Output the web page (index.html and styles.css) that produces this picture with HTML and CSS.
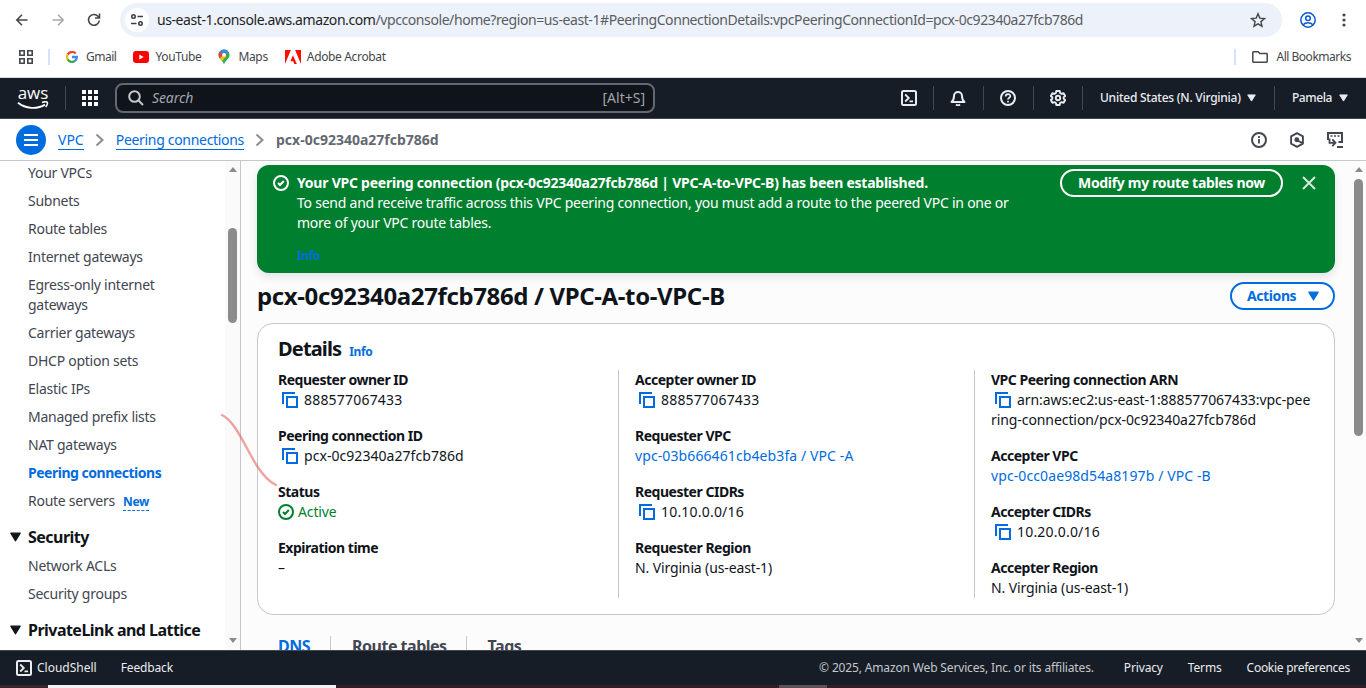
FILE: index.html
```html
<!DOCTYPE html>
<html lang="en">
<head>
<meta charset="utf-8">
<title>VPC peering connection</title>
<link rel="stylesheet" href="styles.css">
</head>
<body>
<svg class="defs" width="0" height="0">
  <symbol id="copy" viewBox="0 0 16 16"><path d="M1 12V1h12M5 5h10v10H5z" fill="none" stroke="currentColor" stroke-width="2"/></symbol>
  <symbol id="check" viewBox="0 0 16 16"><circle cx="8" cy="8" r="7" fill="none" stroke="currentColor" stroke-width="2"/><path d="M5 8l2 2 3.800-4" fill="none" stroke="currentColor" stroke-width="2"/></symbol>
  <symbol id="shell" viewBox="0 0 16 16"><rect x="1" y="1" width="14" height="14" rx="1.5" fill="none" stroke="currentColor" stroke-width="2"/><path d="M4.200 4.500L7.800 8l-3.600 3.500M8.500 11.300H12" fill="none" stroke="currentColor" stroke-width="1.800"/></symbol>
  <symbol id="down" viewBox="0 0 10 9"><path d="M.700 1h8.600L5 8z" fill="currentColor" stroke="currentColor" stroke-linejoin="round"/></symbol>
  <symbol id="chev" viewBox="0 0 10 14"><path d="M1.500 1.500L7.500 7l-6 5.500" fill="none" stroke="currentColor" stroke-width="2"/></symbol>
</svg>

<div class="toolbar">
  <svg class="ic back" viewBox="0 0 16 16"><path d="M13.500 8H3M8 2.800L2.800 8 8 13.200" fill="none" stroke="currentColor" stroke-width="1.600"/></svg>
  <svg class="ic fwd" viewBox="0 0 16 16"><path d="M2.500 8H13M8 2.800L13.200 8 8 13.200" fill="none" stroke="currentColor" stroke-width="1.600"/></svg>
  <svg class="ic reload" viewBox="0 0 16 16"><path d="M13.300 8.500A5.400 5.400 0 1 1 12 4.300L13.300 5.500M13.500 1.500V6H9" fill="none" stroke="currentColor" stroke-width="1.600"/></svg>
  <div class="omnibox">
    <span class="site"><svg width="14" height="14" viewBox="0 0 14 14" fill="none" stroke="#3c3f43" stroke-width="1.600"><circle cx="3.500" cy="3.500" r="1.700"/><path d="M7.500 3.500H13M1 10.500h5.500"/><circle cx="10.500" cy="10.500" r="1.700"/></svg></span>
    <span class="url"><b>us-east-1.console.aws.amazon.com</b>/vpcconsole/home?region=us-east-1#PeeringConnectionDetails:vpcPeeringConnectionId=pcx-0c92340a27fcb786d</span>
    <svg class="star" viewBox="0 0 16 16"><path d="M8 1.800l1.800 4.300 4.700.4-3.600 3.100 1.100 4.600L8 11.800l-4 2.400 1.100-4.600L1.500 6.500l4.700-.4z" fill="none" stroke="#44474a" stroke-width="1.400"/></svg>
  </div>
  <svg class="profile" viewBox="0 0 16 16" fill="none" stroke="#0b57d0" stroke-width="1.500"><circle cx="8" cy="8" r="7.200"/><circle cx="8" cy="6.300" r="2.300"/><path d="M3.200 12.800c2.400-2.600 7.200-2.600 9.600 0"/></svg>
  <svg class="dots" viewBox="0 0 4 14" fill="#44474a"><circle cx="2" cy="2" r="1.600"/><circle cx="2" cy="7" r="1.600"/><circle cx="2" cy="12" r="1.600"/></svg>
</div>

<div class="bookmarks">
  <svg class="apps" viewBox="0 0 14 14" fill="none" stroke="#44474a" stroke-width="1.600"><path d="M.8.800h4.400v4.400H.8zM8.800.800h4.400v4.400H8.800zM.8 8.800h4.400v4.400H.8zM8.800 8.800h4.400v4.400H8.800z"/></svg>
  <i class="bsep"></i>
  <span class="bm gmail"><svg width="12" height="12" viewBox="0 0 12 12" fill="none" stroke-width="2.300"><path d="M9.700 2.600A4.900 4.900 0 0 0 1.700 3.600" stroke="#ea4335"/><path d="M1.700 3.600a4.900 4.900 0 0 0 0 4.800" stroke="#fbbc05"/><path d="M1.700 8.400a4.900 4.900 0 0 0 7.500 1.300" stroke="#34a853"/><path d="M9.200 9.700A4.600 4.600 0 0 0 10.800 6H6" stroke="#4285f4"/></svg>Gmail</span>
  <span class="bm yt"><svg width="16" height="12" viewBox="0 0 16 12"><rect width="16" height="12" rx="3" fill="#f00"/><path d="M6.300 3.500v5L10.700 6z" fill="#fff"/></svg>YouTube</span>
  <span class="bm maps"><svg width="12" height="16" viewBox="0 0 12 16"><path d="M6 .5C9 .5 11.500 2.900 11.500 6c0 3.800-4.300 5-5.500 9.500C4.800 11 .5 9.800.5 6 .5 2.900 3 .5 6 .5z" fill="#34a853"/><path d="M1.700 2.600L5 5.500 1.800 9.600C.3 7.500 0 4.800 1.700 2.600z" fill="#ea4335"/><path d="M1.700 2.600A5.500 5.500 0 0 1 10.300 2.600L6 6z" fill="#4285f4"/><path d="M1.800 9.600L7 4l1.500 3-4.200 5z" fill="#fbbc04"/><circle cx="6" cy="5.800" r="1.900" fill="#fff"/></svg>Maps</span>
  <span class="bm adobe"><svg width="16" height="14" viewBox="0 0 16 14"><path d="M0 0h5.900L0 14zM10.100 0H16v14zM8 5.200L11.800 14H9.300L8.200 11.200H5.400z" fill="#fa0f00"/></svg>Adobe Acrobat</span>
  <i class="bsep right"></i>
  <span class="bm all"><svg width="16" height="12" viewBox="0 0 16 12"><path d="M.8 1.500q0-.7.700-.7h4.700l1.500 1.700h6.800q.7 0 .7.700v7.300q0 .7-.7.700h-13q-.7 0-.7-.7z" fill="none" stroke="#44474a" stroke-width="1.500"/></svg>All Bookmarks</span>
</div>

<header class="nav">
  <span class="aws"><span>aws</span><svg width="32" height="9" viewBox="0 0 32 9" fill="none" stroke="#fff"><path d="M1 1.800C8.500 7.800 20 8.600 28 3.600" stroke-width="1.900"/><path d="M25 1.500c2-.8 4.500-.9 5.200-.3.500.8-.1 3-1.500 4.800" stroke-width="1.500"/></svg></span>
  <i class="vr v1"></i>
  <svg class="grid" viewBox="0 0 16 16" fill="#fff"><path d="M0 0h4v4H0zM6 0h4v4H6zM12 0h4v4h-4zM0 6h4v4H0zM6 6h4v4H6zM12 6h4v4h-4zM0 12h4v4H0zM6 12h4v4H6zM12 12h4v4h-4z"/></svg>
  <div class="search"><svg width="16" height="16" viewBox="0 0 16 16" fill="none" stroke="#c6c6cd" stroke-width="2"><circle cx="6.500" cy="6.500" r="5.300"/><path d="M10.300 10.300L15 15"/></svg><em>Search</em><span>[Alt+S]</span></div>
  <div class="tools">
    <span class="tool"><svg width="16" height="16"><use href="#shell"/></svg></span>
    <span class="tool"><svg width="16" height="16" viewBox="0 0 16 16" fill="none" stroke="currentColor" stroke-width="2"><path d="M1.500 12h13c-2-1.500-2.500-3-2.500-6a4 4 0 0 0-8 0c0 3-.5 4.500-2.500 6z" stroke-linejoin="round"/><path d="M6 14.500q2 1.500 4 0"/></svg></span>
    <span class="tool"><svg width="16" height="16" viewBox="0 0 16 16" fill="none" stroke="currentColor" stroke-width="2"><circle cx="8" cy="8" r="7"/><path d="M5.700 6.500c0-3 4.600-3 4.600-.3C10.300 7.800 8 7.600 8 9.500M8 10.800v1.700" stroke-width="1.700"/></svg></span>
    <span class="tool"><svg width="16" height="16" viewBox="0 0 16 16" fill="none" stroke="currentColor" stroke-width="1.900"><path d="M6.300 1h3.400l.4 2 1.500.9 2-.7L15.200 6l-1.500 1.300v1.500L15.200 10l-1.600 2.800-2-.7-1.500.9-.4 2H6.300l-.4-2-1.500-.9-2 .7L.8 10l1.500-1.300V7.300L.8 6l1.600-2.800 2 .7L5.900 3z" stroke-linejoin="round"/><circle cx="8" cy="8" r="2.200"/></svg></span>
  </div>
  <span class="region"><span>United States (N. Virginia)</span><svg width="9" height="8"><use href="#down"/></svg></span>
  <span class="user"><span>Pamela</span><svg width="9" height="8"><use href="#down"/></svg></span>
</header>

<div class="crumbs">
  <span class="menu"><svg width="14" height="12" viewBox="0 0 14 12"><path d="M0 1h14M0 6h14M0 11h14" stroke="#fff" stroke-width="2"/></svg></span>
  <a class="c1">VPC</a><svg class="chev" viewBox="0 0 10 14"><use href="#chev"/></svg>
  <a class="c2">Peering connections</a><svg class="chev" viewBox="0 0 10 14"><use href="#chev"/></svg>
  <strong>pcx-0c92340a27fcb786d</strong>
  <div class="panel-icons">
    <svg viewBox="0 0 16 16" fill="none" stroke="currentColor" stroke-width="2"><circle cx="8" cy="8" r="7"/><path d="M8 7v4.500M8 4v2" stroke-width="1.800"/></svg>
    <svg viewBox="0 0 16 16" fill="none" stroke="currentColor" stroke-width="1.900"><path d="M8 1.100l5.900 3.300v7.200L8 14.900l-5.900-3.300V4.400z" stroke-linejoin="round"/><circle cx="7.800" cy="7.800" r="1.500" fill="currentColor"/><path d="M8.500 8.500l5 2.600"/></svg>
    <svg viewBox="0 0 16 16" fill="none" stroke="currentColor" stroke-width="2"><path d="M1 8V1h14v9H11.500"/><path d="M3.500 4h2M7 4h2M10.500 4h2" stroke-width="1.500"/><path d="M2.500 6.500v4.300H7M5.300 7.500L8.500 10.800l-3.200 3.300M10 15h6" stroke-width="1.800"/></svg>
  </div>
</div>

<div class="body">
  <aside class="side">
    <nav class="links">
      <a>Your VPCs</a><a>Subnets</a><a>Route tables</a><a>Internet gateways</a><a>Egress-only internet<br>gateways</a><a>Carrier gateways</a><a>DHCP option sets</a><a>Elastic IPs</a><a>Managed prefix lists</a><a>NAT gateways</a><a class="on">Peering connections</a><a>Route servers<small>New</small></a>
      <h3><svg width="11" height="10" viewBox="0 0 10 9"><use href="#down"/></svg>Security</h3>
      <a>Network ACLs</a><a>Security groups</a>
      <h3 class="last"><svg width="11" height="10" viewBox="0 0 10 9"><use href="#down"/></svg>PrivateLink and Lattice</h3>
    </nav>
    <div class="scroll"><i class="up"></i><i class="thumb"></i><i class="dn"></i></div>
  </aside>
  <main class="main">
    <section class="flash">
      <svg class="ok" width="16" height="16"><use href="#check"/></svg>
      <div class="msg"><b>Your VPC peering connection (pcx-0c92340a27fcb786d | VPC-A-to-VPC-B) has been established.</b><p>To send and receive traffic across this VPC peering connection, you must add a route to the peered VPC in one or<br>more of your VPC route tables.</p><a class="info">Info</a></div>
      <span class="modify">Modify my route tables now</span>
      <svg class="close" viewBox="0 0 14 14"><path d="M1 1l12 12M13 1L1 13" stroke="#d9eadf" stroke-width="2"/></svg>
    </section>
    <div class="heading"><h1>pcx-0c92340a27fcb786d / VPC-A-to-VPC-B</h1><span class="actions"><span>Actions</span><svg width="11" height="10" viewBox="0 0 10 9"><use href="#down"/></svg></span></div>
    <section class="card">
      <h2><span>Details</span><a class="info">Info</a></h2>
      <div class="cols">
        <dl>
          <dt>Requester owner ID</dt><dd class="num"><svg class="copy"><use href="#copy"/></svg>888577067433</dd>
          <dt>Peering connection ID</dt><dd class="id"><svg class="copy"><use href="#copy"/></svg>pcx-0c92340a27fcb786d</dd>
          <dt>Status</dt><dd class="active"><svg class="st"><use href="#check"/></svg>Active</dd>
          <dt>Expiration time</dt><dd>–</dd>
        </dl>
        <dl>
          <dt>Accepter owner ID</dt><dd class="num"><svg class="copy"><use href="#copy"/></svg>888577067433</dd>
          <dt>Requester VPC</dt><dd class="link">vpc-03b666461cb4eb3fa / VPC -A</dd>
          <dt>Requester CIDRs</dt><dd class="num"><svg class="copy"><use href="#copy"/></svg>10.10.0.0/16</dd>
          <dt>Requester Region</dt><dd>N. Virginia (us-east-1)</dd>
        </dl>
        <dl>
          <dt>VPC Peering connection ARN</dt><dd class="arn"><svg class="copy"><use href="#copy"/></svg>arn:aws:ec2:us-east-1:888577067433:vpc-pee<br>ring-connection/pcx-0c92340a27fcb786d</dd>
          <dt>Accepter VPC</dt><dd class="link">vpc-0cc0ae98d54a8197b / VPC -B</dd>
          <dt>Accepter CIDRs</dt><dd class="num"><svg class="copy"><use href="#copy"/></svg>10.20.0.0/16</dd>
          <dt>Accepter Region</dt><dd>N. Virginia (us-east-1)</dd>
        </dl>
      </div>
    </section>
    <div class="tabs"><span class="on">DNS</span><span>Route tables</span><span>Tags</span></div>
  </main>
  <div class="scroll page"><i class="up"></i><i class="thumb"></i><i class="dn"></i></div>
</div>

<footer class="foot">
  <svg width="16" height="16"><use href="#shell"/></svg><span class="cs">CloudShell</span><span class="fb">Feedback</span>
  <span class="copyr">© 2025, Amazon Web Services, Inc. or its affiliates.</span><span class="pr">Privacy</span><span class="te">Terms</span><span class="ck">Cookie preferences</span>
</footer>
<div class="taskbar"><i class="s1"></i><i class="s2"></i><i class="s3"></i><i class="s4"></i><i class="s5"></i></div>
<svg class="pen" width="60" height="76" viewBox="0 0 60 76"><path d="M2 2C16 9 25 34 37 53Q47 68 56 72" fill="none" stroke="#e66a6a" stroke-opacity=".62" stroke-width="2.400" stroke-linecap="round"/></svg>
</body>
</html>
```
FILE: styles.css
```css
* { box-sizing: border-box; }
body { margin: 0; width: 1366px; height: 688px; overflow: hidden; position: relative; background: #fff; color: #0f141a; font: 14px/20px "Noto Sans", sans-serif; white-space: nowrap; }
svg { flex: none; display: block; }
.defs { position: absolute; }
h1, h2, h3, p, dl, dd, dt { margin: 0; }

.toolbar { height: 40px; display: flex; align-items: center; color: #44474a; }
.ic { width: 16px; height: 16px; }
.back { margin-left: 14px; }
.fwd { margin-left: 20px; color: #aaa; }
.reload { margin-left: 20px; }
.omnibox { margin-left: 18px; width: 1162px; height: 34px; border-radius: 17px; background: #edf1fa; display: flex; align-items: center; padding: 0 16px 0 5px; }
.site { width: 24px; height: 24px; border-radius: 50%; background: #fff; display: flex; align-items: center; justify-content: center; }
.url { margin-left: 8px; flex: 1; color: #5a5d61; font-size: 14px; letter-spacing: -.415px; }
.url b { font-weight: 400; color: #1f1f1f; }
.star { width: 16px; height: 16px; }
.profile { width: 16px; height: 16px; margin-left: 18px; }
.dots { width: 4px; height: 14px; margin-left: 26px; }

.bookmarks { height: 38px; border-bottom: 1px solid #d9dbe0; display: flex; align-items: center; padding: 0 15px 3px 19px; font-size: 12px; color: #44474a; }
.apps { width: 14px; height: 14px; }
.bsep { width: 2px; height: 16px; background: #d3e3fd; margin-left: 15px; }
.bsep.right { margin-left: auto; }
.bm { display: flex; align-items: center; gap: 8px; letter-spacing: -.35px; }
.gmail { margin-left: 16px; letter-spacing: -.5px; }
.yt, .maps { margin-left: 17px; }
.yt { gap: 6px; }
.adobe { margin-left: 17px; gap: 6px; }
.all { margin-left: 16px; letter-spacing: -.48px; }

.nav { height: 41px; background: #161d26; border-bottom: 1px solid #424650; display: flex; align-items: center; color: #ebebf0; font-size: 12px; }
.aws { width: 32px; margin-left: 17px; display: flex; flex-direction: column; align-items: center; color: #fff; font: 500 17px/15px "Open Sans", sans-serif; }
.aws span { margin-top: -2px; }
.aws svg { margin-top: 1px; }
.vr { width: 1px; height: 24px; background: #424650; }
.v1 { margin-left: 16px; }
.grid { width: 16px; height: 16px; margin-left: 16px; }
.search { margin-left: 17px; width: 540px; height: 30px; border: 2px solid #656871; border-radius: 8px; background: #0f141a; display: flex; align-items: center; padding: 0 8px 0 11px; color: #a4a4ad; font-size: 14px; }
.search em { margin-left: 8px; flex: 1; letter-spacing: -.1px; }
.tools { margin-left: 234px; display: flex; }
.tool { width: 50px; height: 24px; border-right: 1px solid #424650; display: flex; align-items: center; justify-content: center; padding-right: 1px; }
.tool:first-child { width: 45px; padding-right: 4px; }
.tool:last-child { width: 49px; padding-right: 0; }
.region, .user { display: flex; align-items: center; height: 24px; font-weight: 500; }
.region { width: 192px; padding-left: 17px; gap: 6px; border-right: 1px solid #424650; letter-spacing: -.24px; }
.user { padding-left: 17px; gap: 7px; letter-spacing: -.45px; }

.crumbs { height: 42px; border-bottom: 1px solid #c6c6cd; display: flex; align-items: center; padding: 0 23px 0 16px; color: #656871; }
.menu { width: 30px; height: 30px; border-radius: 50%; background: #006ce0; display: flex; align-items: center; justify-content: center; }
.crumbs a { color: #006ce0; border-bottom: 1px solid #006ce0; line-height: 19px; }
.c1 { margin-left: 12px; }
.c2 { letter-spacing: -.31px; }
.chev { width: 10px; height: 14px; margin: 0 11px; color: #8c8c94; }
.panel-icons { margin-left: auto; display: flex; gap: 22px; color: #424650; }
.panel-icons svg { width: 16px; height: 16px; }

.body { height: 489px; display: flex; overflow: hidden; }
.side { width: 241px; border-right: 1px solid #c6c6cd; display: flex; }
.links { flex: 1; padding: 2px 0 0 28px; display: flex; flex-direction: column; gap: 8px; color: #424650; letter-spacing: -.26px; }
.links .on { color: #006ce0; font-weight: 700; letter-spacing: -.48px; }
.links small { color: #006ce0; font-size: 12px; font-weight: 700; margin-left: 8px; border-bottom: 1px dashed #006ce0; display: inline-block; line-height: 17px; }
.links h3 { margin: 8px 0 0 -18px; display: flex; align-items: center; gap: 7px; color: #0f141a; font-size: 16px; line-height: 20px; letter-spacing: -.53px; }
.links h3 + a { margin-top: 1px; }
.scroll { width: 15px; background: #fafafa; display: flex; flex-direction: column; align-items: center; }
.up, .dn { border: 4.500px solid transparent; height: 0; width: 0; }
.up { border-bottom: 5px solid #8b8b8b; border-top: 0; margin-top: 6px; }
.dn { border-top: 5px solid #8b8b8b; border-bottom: 0; margin-top: auto; margin-bottom: 7px; }
.thumb { width: 9px; height: 95px; border-radius: 5px; background: #8b8b8b; margin-top: 56px; }
.main { width: 1110px; padding: 4px 16px 0; background: #fcfcfd; }
.page { width: 15px; background: #fcfcfc; }
.page .thumb { height: 257px; margin-top: 7px; }

.flash { height: 108px; border-radius: 12px; background: #00802f; color: #fff; display: flex; padding: 4px 19px 0 16px; box-shadow: 0 4px 10px rgba(0,7,22,.1); letter-spacing: -.237px; }
.ok { margin-top: 6px; }
.msg { margin: 4px 0 0 8px; flex: 1; }
.info { color: #006ce0; font-size: 12px; font-weight: 700; letter-spacing: -.4px; }
.msg .info { display: block; margin-top: 13px; }
.modify { width: 223px; height: 28px; border: 2px solid #fff; border-radius: 14px; text-align: center; font-weight: 700; line-height: 24px; letter-spacing: -.32px; }
.close { width: 14px; height: 14px; margin: 7px 0 0 19px; }
.heading { margin-top: 9px; height: 28px; display: flex; justify-content: space-between; align-items: center; }
h1 { font-size: 24px; line-height: 28px; letter-spacing: -.37px; }
.actions { width: 105px; height: 28px; border: 2px solid #006ce0; border-radius: 14px; display: flex; align-items: center; justify-content: space-between; padding: 0 14px 0 15px; color: #006ce0; background: #fff; font-weight: 700; letter-spacing: -.4px; }
.card { margin-top: 13px; height: 292px; border: 1px solid #c6c6cd; border-radius: 16px; background: #fff; padding: 13px 20px 0; }
.card h2 { height: 24px; font-size: 20px; line-height: 24px; letter-spacing: -.85px; display: flex; align-items: baseline; gap: 8px; }
.cols { margin-top: 9px; display: flex; }
dl { flex: none; width: 357px; height: 228px; letter-spacing: -.13px; }
dl + dl { width: 356px; margin-left: -17px; border-left: 1px solid #c6c6cd; padding-left: 16px; }
dl:nth-child(2) { width: 373px; }
dt { font-weight: 700; letter-spacing: -.48px; }
dd { margin-bottom: 16px; }
.num { letter-spacing: .2px; }
.id { letter-spacing: .05px; }
.arn { letter-spacing: -.08px; }
.copy { display: inline-block; width: 16px; height: 16px; margin: 2px 6px 0 4px; vertical-align: top; color: #006ce0; }
.st { display: inline-block; width: 16px; height: 16px; margin: 2px 4px 0 0; vertical-align: top; }
.active { color: #00802f; }
.link { color: #006ce0; letter-spacing: .1px; }
.tabs { margin-top: 21px; height: 28px; display: flex; font-size: 16px; font-weight: 700; color: #424650; letter-spacing: -.5px; }
.tabs span { padding: 0 19px 0 21px; border-left: 1px solid #c6c6cd; }
.tabs .on { color: #006ce0; border: 0; padding-right: 20px; }

.foot { height: 35px; background: #161d26; border-top: 1px solid #424650; display: flex; align-items: center; padding: 0 16px; color: #ebebf0; font-size: 12px; letter-spacing: -.15px; }
.cs { margin-left: 5px; letter-spacing: 0; }
.fb { margin-left: 24px; }
.copyr { margin-left: auto; color: #c6c6cd; }
.pr { margin-left: 30px; }
.te, .ck { margin-left: 25px; }
.ck { letter-spacing: -.28px; }
.taskbar { height: 3px; display: flex; background: #331d22; }
.s1 { width: 48px; background: #3a2626; }
.s2 { width: 288px; background: #f3f0f0; }
.s3 { width: 443px; }
.s4 { width: 48px; background: #5e5053; }
.s5 { flex: 1; }
.pen { position: absolute; left: 220px; top: 413px; }
```
